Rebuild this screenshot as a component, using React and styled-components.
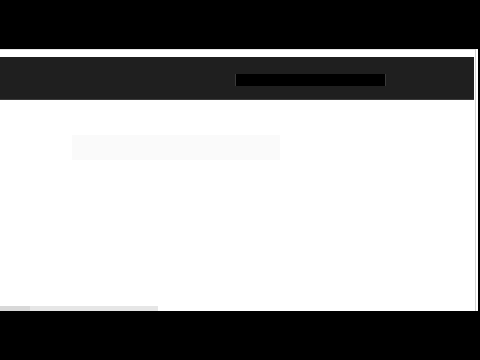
import styled, { createGlobalStyle } from 'styled-components'

const GlobalStyle = createGlobalStyle`
    html, body {
        margin: 0;
        padding: 0;
        background: #000;
        font-family: "Liberation Sans", Arial, sans-serif;
    }
`

const Frame = styled.div`
    width: 480px;
    height: 360px;
    background: #000;
    display: flex;
    flex-direction: column;
    padding: 49px 0;
    box-sizing: border-box;
`
const Viewport = styled.div`
    flex: 1;
    display: flex;
`
const Page = styled.div`
    width: 475px;
    background: #fff;
    display: flex;
    flex-direction: column;
    border-top: 1px solid #e4e4e4;
`
const Navbar = styled.div`
    margin-top: 7px;
    height: 43px;
    width: 474px;
    background: #1f1f1f;
    border-bottom: 1px solid #3a3a3a;
    box-sizing: border-box;
    display: flex;
    align-items: flex-start;
    padding: 17px 0 0 235px;
`
const Search = styled.div`
    width: 151px;
    height: 12px;
    background: #000;
    border-left: 1px solid #3a3a3a;
    border-right: 1px solid #3a3a3a;
    box-sizing: border-box;
`
const Content = styled.div`
    flex: 1;
    padding: 35px 0 0 72px;
`
const Card = styled.div`
    width: 208px;
    height: 25px;
    background: #fafafa;
`
const HScroll = styled.div`
    height: 5px;
    width: 158px;
    background: #e6e6e6;
    display: flex;
`
const HThumb = styled.div`
    width: 30px;
    background: #d8d8d8;
`
const VScroll = styled.div`
    width: 2px;
    background: #fff;
    border-left: 1px solid #d4d4d4;
`

const App = () => {
    return (
        <Frame>
            <GlobalStyle />
            <Viewport>
                <Page>
                    <Navbar>
                        <Search />
                    </Navbar>
                    <Content>
                        <Card />
                    </Content>
                    <HScroll>
                        <HThumb />
                    </HScroll>
                </Page>
                <VScroll />
            </Viewport>
        </Frame>
    )
}

export default App
